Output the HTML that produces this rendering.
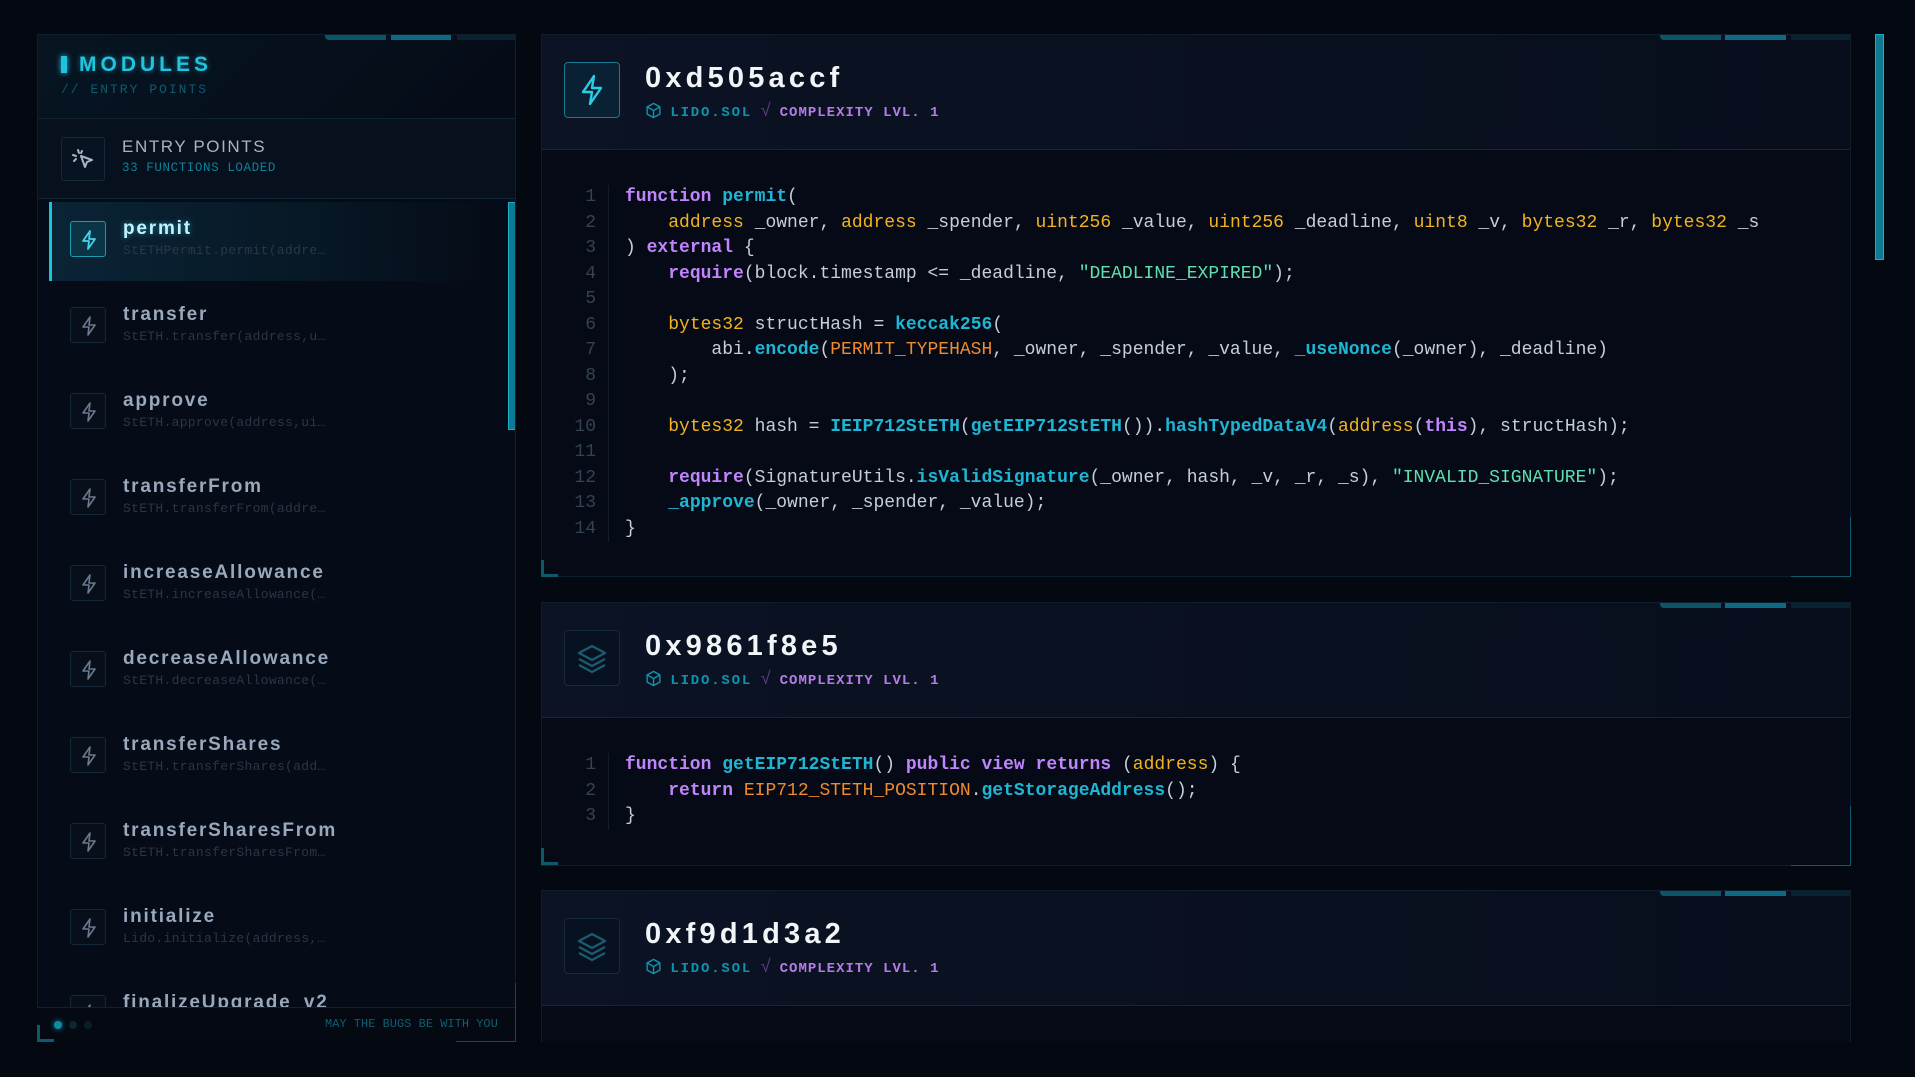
<!DOCTYPE html>
<html><head><meta charset="utf-8"><style>
*{margin:0;padding:0;box-sizing:border-box}
html,body{width:1915px;height:1077px;overflow:hidden;background:#040811;font-family:"Liberation Sans",sans-serif}
.abs{position:absolute}
.side{position:absolute;left:37px;top:34px;width:479px;height:1008px;background:#050b17;border:1px solid #0f1e2c;overflow:hidden}
.bar{position:absolute;height:5px;top:0}
.hdr{position:absolute;left:0;top:0;width:100%;height:84px;background:linear-gradient(135deg,#071522,#050b17);border-bottom:1px solid #0f2433}
.mod{position:absolute;left:41px;top:18px;font:bold 21px "Liberation Sans",sans-serif;letter-spacing:4px;color:#22c3df;text-shadow:0 0 6px rgba(34,195,223,.5)}
.mark{position:absolute;left:23px;top:21px;width:6px;height:17px;background:#22c3df;box-shadow:0 0 6px #22c3df}
.sub1{position:absolute;left:23px;top:47px;font:13px "Liberation Mono",monospace;letter-spacing:2px;color:#0e5a6e}
.ep{position:absolute;left:0;top:84px;width:100%;height:80px;background:#07111d;border-bottom:1px solid #0f2433}
.box{position:absolute;border:1px solid #15293a;border-radius:3px;background:#07101c}
.item{position:absolute;left:11px;width:456px;height:79px}
.item .ic{position:absolute;left:21px;top:19px;width:36px;height:36px;border:1px solid #15283a;border-radius:3px;background:#070f1b}
.item .nm{position:absolute;left:74px;top:16px;font:bold 19px "Liberation Sans",sans-serif;letter-spacing:1.8px;color:#9aa8bc}
.item .sb{position:absolute;left:74px;top:41px;font:13px "Liberation Mono",monospace;color:#2a3748;letter-spacing:.3px}
.card{position:absolute;left:541px;width:1310px;background:#050a16;border:1px solid #0f1e2c;overflow:hidden}
.ch{position:absolute;left:0;top:0;width:100%;height:115px;background:linear-gradient(90deg,#0b1324,#080e1c);border-bottom:1px solid #10283a}
.cic{position:absolute;left:22px;top:27px;width:56px;height:56px;border:1px solid #15293a;border-radius:4px;background:#08111f}
.ttl{position:absolute;left:103px;top:27px;font:bold 29px "Liberation Sans",sans-serif;letter-spacing:4.2px;color:#f2f5f8}
.meta{position:absolute;left:103px;top:67px;font:bold 14px "Liberation Mono",monospace;white-space:nowrap}
.meta .l{color:#0e93ad;letter-spacing:1.8px}
.meta .c{color:#b57be8;letter-spacing:1px}
.meta .r{color:#5b3f80;font-size:18px;font-weight:normal}
.code{position:absolute;left:0;top:150px;font:18px/25.5px "Liberation Mono",monospace;color:#c5ced9;white-space:pre}
.ln{position:absolute;left:0;width:54px;text-align:right;color:#334254}
.gut{position:absolute;left:66px;width:1px;background:#111d2a}
.src{position:absolute;left:83px}
.k{color:#c084fc;font-weight:bold}.f{color:#1fb6d3;font-weight:bold}.t{color:#f2b41e}.s{color:#5ee0b0}.o{color:#f08a2c}
.tb{position:absolute;top:0;height:5px}
</style></head><body>

<div class="side">
  <div class="hdr">
    <div class="mark"></div><div class="mod">MODULES</div>
    <div class="sub1">// ENTRY POINTS</div>
  </div>
  <div class="bar" style="left:287px;width:61px;background:#0b5569;border-radius:0 0 0 4px"></div>
  <div class="bar" style="left:353px;width:60px;background:#0c6a82"></div>
  <div class="bar" style="left:419px;width:60px;background:#0a2230"></div>
  <div class="ep">
    <div class="box" style="left:23px;top:18px;width:44px;height:44px;background:#071320">
      <svg width="44" height="44" viewBox="0 0 44 44" style="position:absolute;left:-1px;top:-1px"><g fill="none" stroke="#aab4c2" stroke-width="2" stroke-linecap="round" stroke-linejoin="round"><path d="M20 19l11 4-5 2-2 5z"/><path d="M17 13l1 3M12 18l3 1M13 24l2-2M21 14l-1 2"/></g></svg>
    </div>
    <div class="abs" style="left:84px;top:18px;font:17px 'Liberation Sans',sans-serif;letter-spacing:1.6px;color:#a9b3c1">ENTRY POINTS</div>
    <div class="abs" style="left:84px;top:42px;font:12.5px 'Liberation Mono',monospace;letter-spacing:.6px;color:#0e7f99">33 FUNCTIONS LOADED</div>
  </div>

  <div class="item" style="top:167px;background:linear-gradient(90deg,#0a2436,#071724 60%,#050b17)">
    <div class="abs" style="left:0;top:0;width:3px;height:79px;background:#1fc0dc"></div>
    <div class="ic" style="border-color:#1a9ab3;background:#0b3447"><svg width="36" height="36" viewBox="0 0 36 36"><path d="M19 9l-7 10h6l-1 8 7-10h-6z" fill="none" stroke="#45d3ec" stroke-width="1.8" stroke-linejoin="round"/></svg></div>
    <div class="nm" style="color:#bff4ff;text-shadow:0 0 6px rgba(80,220,255,.5)">permit</div>
    <div class="sb">StETHPermit.permit(addre…</div>
  </div>
  <div class="abs" style="left:470px;top:167px;width:8px;height:228px;background:#0d7a94;border:1px solid #1ab0cc"></div>
</div>

<!-- footer -->
<div class="abs" style="left:37px;top:1007px;width:479px;height:35px;background:#040912;border-top:1px solid #0f2231"></div>
<div class="abs" style="left:515px;top:983px;width:1px;height:59px;background:#0d4c5e"></div>
<div class="abs" style="left:456px;top:1041px;width:60px;height:1px;background:#0d4c5e"></div>
<div class="abs" style="left:37px;top:1025px;width:3px;height:17px;background:#0d5a6c"></div>
<div class="abs" style="left:37px;top:1039px;width:17px;height:3px;background:#0d5a6c"></div>
<div class="abs" style="left:54px;top:1021px;width:8px;height:8px;border-radius:50%;background:#118ba4;box-shadow:0 0 6px #118ba4"></div>
<div class="abs" style="left:69px;top:1021px;width:8px;height:8px;border-radius:50%;background:#0c2532"></div>
<div class="abs" style="left:84px;top:1021px;width:8px;height:8px;border-radius:50%;background:#0b1d29"></div>
<div class="abs" style="left:325px;top:1017px;font:12px 'Liberation Mono',monospace;letter-spacing:0;color:#0e5f73">MAY THE BUGS BE WITH YOU</div>

<!-- card 1 -->
<div class="card" style="top:34px;height:543px">
  <div class="ch"></div>
  <div class="tb" style="left:1118px;width:61px;background:#0b5569;border-radius:0 0 0 4px"></div>
  <div class="tb" style="left:1183px;width:61px;background:#0c6a82"></div>
  <div class="tb" style="left:1249px;width:61px;background:#0a2230"></div>
  <div class="cic" style="border-color:#167a90;background:#0a2133"><svg width="54" height="54" viewBox="0 0 54 54"><path d="M29 13l-11 16h9l-2 12 11-16h-9z" fill="none" stroke="#2ccbe6" stroke-width="2.4" stroke-linejoin="round"/></svg></div>
  <div class="ttl">0xd505accf</div>
  <div class="meta"><svg width="17" height="17" viewBox="0 0 24 24" style="vertical-align:-3px"><path d="M12 2l9 5v10l-9 5-9-5V7zM3 7l9 5 9-5M12 12v10" fill="none" stroke="#0e93ad" stroke-width="2"/></svg> <span class="l">LIDO.SOL</span> <span class="r">√</span> <span class="c">COMPLEXITY LVL. 1</span></div>
  <div class="code">
<div class="ln" style="top:0">1
2
3
4
5
6
7
8
9
10
11
12
13
14</div><div class="gut" style="top:0;height:357px"></div><div class="src" style="top:0"><span class="k">function</span> <span class="f">permit</span>(
    <span class="t">address</span> _owner, <span class="t">address</span> _spender, <span class="t">uint256</span> _value, <span class="t">uint256</span> _deadline, <span class="t">uint8</span> _v, <span class="t">bytes32</span> _r, <span class="t">bytes32</span> _s
) <span class="k">external</span> {
    <span class="k">require</span>(block.timestamp &lt;= _deadline, <span class="s">"DEADLINE_EXPIRED"</span>);

    <span class="t">bytes32</span> structHash = <span class="f">keccak256</span>(
        abi.<span class="f">encode</span>(<span class="o">PERMIT_TYPEHASH</span>, _owner, _spender, _value, <span class="f">_useNonce</span>(_owner), _deadline)
    );

    <span class="t">bytes32</span> hash = <span class="f">IEIP712StETH</span>(<span class="f">getEIP712StETH</span>()).<span class="f">hashTypedDataV4</span>(<span class="t">address</span>(<span class="k">this</span>), structHash);

    <span class="k">require</span>(SignatureUtils.<span class="f">isValidSignature</span>(_owner, hash, _v, _r, _s), <span class="s">"INVALID_SIGNATURE"</span>);
    <span class="f">_approve</span>(_owner, _spender, _value);
}</div></div>
</div>
<div class="abs" style="left:541px;top:560px;width:3px;height:17px;background:#0d5a6c"></div>
<div class="abs" style="left:541px;top:574px;width:17px;height:3px;background:#0d5a6c"></div>
<div class="abs" style="left:1850px;top:517px;width:1px;height:60px;background:#0d5a6c"></div>
<div class="abs" style="left:1791px;top:576px;width:60px;height:1px;background:#0d5a6c"></div>

<!-- card 2 -->
<div class="card" style="top:602px;height:264px">
  <div class="ch"></div>
  <div class="tb" style="left:1118px;width:61px;background:#0b5569;border-radius:0 0 0 4px"></div>
  <div class="tb" style="left:1183px;width:61px;background:#0c6a82"></div>
  <div class="tb" style="left:1249px;width:61px;background:#0a2230"></div>
  <div class="cic"><svg width="54" height="54" viewBox="0 0 54 54"><g fill="none" stroke="#1c5a70" stroke-width="2.4" stroke-linejoin="round"><path d="M27 15l13 7-13 7-13-7z"/><path d="M14 28l13 7 13-7"/><path d="M14 34l13 7 13-7"/></g></svg></div>
  <div class="ttl">0x9861f8e5</div>
  <div class="meta"><svg width="17" height="17" viewBox="0 0 24 24" style="vertical-align:-3px"><path d="M12 2l9 5v10l-9 5-9-5V7zM3 7l9 5 9-5M12 12v10" fill="none" stroke="#0e93ad" stroke-width="2"/></svg> <span class="l">LIDO.SOL</span> <span class="r">√</span> <span class="c">COMPLEXITY LVL. 1</span></div>
  <div class="code">
<div class="ln" style="top:0">1
2
3</div><div class="gut" style="top:0;height:77px"></div><div class="src" style="top:0"><span class="k">function</span> <span class="f">getEIP712StETH</span>() <span class="k">public</span> <span class="k">view</span> <span class="k">returns</span> (<span class="t">address</span>) {
    <span class="k">return</span> <span class="o">EIP712_STETH_POSITION</span>.<span class="f">getStorageAddress</span>();
}</div></div>
</div>
<div class="abs" style="left:541px;top:848px;width:3px;height:17px;background:#0d5a6c"></div>
<div class="abs" style="left:541px;top:862px;width:17px;height:3px;background:#0d5a6c"></div>
<div class="abs" style="left:1850px;top:806px;width:1px;height:60px;background:#0d5a6c"></div>
<div class="abs" style="left:1791px;top:865px;width:60px;height:1px;background:#0d5a6c"></div>

<!-- card 3 -->
<div class="card" style="top:890px;height:152px;border-bottom:none">
  <div class="ch"></div>
  <div class="tb" style="left:1118px;width:61px;background:#0b5569;border-radius:0 0 0 4px"></div>
  <div class="tb" style="left:1183px;width:61px;background:#0c6a82"></div>
  <div class="tb" style="left:1249px;width:61px;background:#0a2230"></div>
  <div class="cic"><svg width="54" height="54" viewBox="0 0 54 54"><g fill="none" stroke="#1c5a70" stroke-width="2.4" stroke-linejoin="round"><path d="M27 15l13 7-13 7-13-7z"/><path d="M14 28l13 7 13-7"/><path d="M14 34l13 7 13-7"/></g></svg></div>
  <div class="ttl">0xf9d1d3a2</div>
  <div class="meta"><svg width="17" height="17" viewBox="0 0 24 24" style="vertical-align:-3px"><path d="M12 2l9 5v10l-9 5-9-5V7zM3 7l9 5 9-5M12 12v10" fill="none" stroke="#0e93ad" stroke-width="2"/></svg> <span class="l">LIDO.SOL</span> <span class="r">√</span> <span class="c">COMPLEXITY LVL. 1</span></div>
</div>
<div class="abs" style="left:0;top:1042px;width:1915px;height:35px;background:#040811"></div>

<!-- right scrollbar -->
<div class="abs" style="left:1875px;top:34px;width:9px;height:226px;background:#0d7a94;border:1px solid #1ab0cc"></div>

<script>
var it=[["transfer","StETH.transfer(address,u…"],["approve","StETH.approve(address,ui…"],["transferFrom","StETH.transferFrom(addre…"],["increaseAllowance","StETH.increaseAllowance(…"],["decreaseAllowance","StETH.decreaseAllowance(…"],["transferShares","StETH.transferShares(add…"],["transferSharesFrom","StETH.transferSharesFrom…"],["initialize","Lido.initialize(address,…"],["finalizeUpgrade_v2","Lido.finalizeUpgrade_v2(…"]];
var s=document.querySelector('.side'),h='';
it.forEach(function(a,i){h+='<div class="item" style="top:'+(167+86*(i+1))+'px"><div class="ic"><svg width="36" height="36" viewBox="0 0 36 36"><path d="M19 9l-7 10h6l-1 8 7-10h-6z" fill="none" stroke="#6b7a8e" stroke-width="1.6" stroke-linejoin="round"/></svg></div><div class="nm">'+a[0]+'</div><div class="sb">'+a[1]+'</div></div>';});
s.insertAdjacentHTML('beforeend',h);
</script>
</body></html>
